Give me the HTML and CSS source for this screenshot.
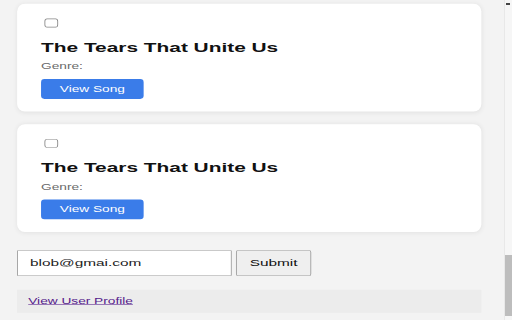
FILE: index.html
```html
<!DOCTYPE html>
<html>
<head>
  <meta charset="utf-8">
  <meta name="viewport" content="width=device-width">
  <title>Songs</title>
  <link rel="stylesheet" href="styles.css">
</head>
<body>
  <div class="screen">
    <div class="view">
      <div class="page">
        <div class="song-card">
          <input type="checkbox" class="pick">
          <h2 class="song-title">The Tears That Unite Us</h2>
          <p class="genre">Genre:</p>
          <button class="view-btn">View Song</button>
        </div>
        <div class="song-card">
          <input type="checkbox" class="pick">
          <h2 class="song-title">The Tears That Unite Us</h2>
          <p class="genre">Genre:</p>
          <button class="view-btn">View Song</button>
        </div>
        <form class="email-form">
          <input type="email" class="email" value="blob@gmai.com">
          <button type="submit" class="submit-btn">Submit</button>
        </form>
        <div class="profile-bar">
          <a href="#" class="profile-link">View User Profile</a>
        </div>
      </div>
    </div>
    <div class="scrollbar">
      <span class="arrow"></span>
      <span class="thumb"></span>
    </div>
  </div>
</body>
</html>
```

FILE: styles.css
```css
html, body {
  margin: 0;
  padding: 0;
}

body {
  background-color: #f3f3f3;
  font-family: 'Liberation Sans', Arial, sans-serif;
  overflow: hidden;
}

.screen {
  display: flex;
  height: 320px;
}

.view {
  flex: 1;
  overflow: hidden;
  display: flex;
  flex-direction: column;
  justify-content: flex-end;
}

/* the capture is squeezed, so the page is drawn at full size and scaled */
.page {
  flex-shrink: 0;
  width: 590px;
  box-sizing: border-box;
  padding: 0 27px 13px 20px;
  transform: scale(0.855, 0.55);
  transform-origin: left bottom;
}

.song-card {
  background-color: #fff;
  border-radius: 9px / 14px;
  box-shadow: 0 1px 7px rgba(0,0,0,0.07);
  padding: 25px 28px 23px;
  margin-bottom: 23px;
  display: flex;
  flex-direction: column;
  align-items: flex-start;
}

.song-card:nth-child(2) {
  margin-bottom: 33px;
}

.pick {
  appearance: none;
  width: 16px;
  height: 16px;
  margin: 2px 0 0 4px;
  border-style: solid;
  border-color: #858585;
  border-width: 1.8px 1.2px;
  border-radius: 3px / 5px;
  background-color: #fff;
}

.song-title {
  margin: 22px 0 0;
  font-size: 24.4px;
  line-height: 28px;
  font-weight: bold;
  color: #111;
}

.genre {
  margin: 12px 0 0;
  font-size: 16px;
  line-height: 18px;
  color: #6a6a6a;
}

.view-btn {
  margin-top: 14px;
  width: 120px;
  height: 36px;
  border: 0;
  border-radius: 4px / 6px;
  background-color: #3a7ce9;
  color: #fff;
  font-family: inherit;
  font-size: 16px;
}

.email-form {
  display: flex;
  gap: 5px;
  margin: 0 0 25px;
}

.email, .submit-btn {
  height: 47px;
  box-sizing: border-box;
  border-style: solid;
  border-color: #9a9a9a;
  border-width: 1.8px 1.2px;
  font-family: inherit;
  font-size: 18px;
}

.email {
  width: 251px;
  padding: 0 14px;
  color: #222;
  background-color: #fff;
  border-radius: 1px / 2px;
}

.submit-btn {
  width: 88px;
  color: #111;
  background-color: #efefef;
  border-radius: 2px / 4px;
}

.profile-bar {
  background-color: #ececec;
  padding: 11px 13px 13px;
  line-height: 18px;
}

.profile-link {
  color: #551a8b;
  font-size: 16px;
}

.scrollbar {
  width: 8px;
  display: flex;
  flex-direction: column;
  border-left: 1px solid #e8e8e8;
  background-color: #f6f6f6;
  box-sizing: border-box;
}

.arrow {
  width: 4px;
  height: 2px;
  margin: 3px 0 0 1px;
  background-color: #444;
}

.thumb {
  margin-top: auto;
  margin-bottom: 4px;
  height: 61px;
  background-color: #bdbdbd;
}
```
